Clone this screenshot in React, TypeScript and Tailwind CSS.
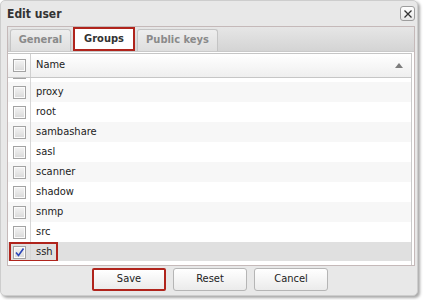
import React from "react";

const groups = ["", "proxy", "root", "sambashare", "sasl", "scanner", "shadow", "snmp", "src", "ssh"];

function Check({ checked }: { checked?: boolean }) {
  return (
    <div className="relative h-[13px] w-[13px] border border-[#a3a3a3] bg-gradient-to-b from-[#f4f4f4] to-[#d9d9d9] shadow-[inset_0_0_0_1px_#fbfbfb]">
      {checked && (
        <svg viewBox="0 0 13 13" className="absolute left-[-1px] top-[-1px] h-[13px] w-[13px]">
          <path d="M3 6.5 L5.5 9.5 L10.5 2.5" fill="none" stroke="#2a45b8" strokeWidth="1.6" />
        </svg>
      )}
    </div>
  );
}

export default function App() {
  return (
    <div className="h-[300px] w-[423px] bg-white font-['DejaVu_Sans_Condensed','DejaVu_Sans',sans-serif] text-[11px] text-[#222]">
      <div className="flex h-[296px] w-[418px] flex-col rounded-[5px] border border-[#cdcdcd] bg-[#e8e8e8] shadow-[2px_2px_3px_rgba(0,0,0,0.35)]">
        {/* title */}
        <div className="flex h-[25px] items-center justify-between pl-[6px] pr-[2px]">
          <span className="text-[12px] font-bold text-[#333]">Edit user</span>
          <button className="flex h-[15px] w-[15px] items-center justify-center rounded-[3px] border border-[#9d9d9d] bg-gradient-to-b from-white to-[#e6e6e6]">
            <svg viewBox="0 0 10 10" className="h-[10px] w-[10px]">
              <path d="M1.5 1.5 L8.5 8.5 M8.5 1.5 L1.5 8.5" stroke="#333" strokeWidth="1.3" />
            </svg>
          </button>
        </div>

        {/* tab panel */}
        <div className="ml-[6px] mr-[2px] flex h-[240px] flex-col border border-[#c5b9b9] bg-white">
          <div className="flex h-[25px] items-end gap-[2px] border-b border-[#c9c9c9] bg-gradient-to-b from-[#e6e6e6] to-[#d4d4d4] pl-[2px]">
            <div className="flex h-[22px] w-[61px] items-center justify-center rounded-t-[3px] border border-b-0 border-[#c4c4c4] bg-gradient-to-b from-[#eeeeee] to-[#dedede] font-bold text-[#8a8a8a]">
              General
            </div>
            <div className="flex h-[24px] w-[62px] items-center justify-center border-2 border-[#b0241c] bg-white font-bold text-[#333]">
              Groups
            </div>
            <div className="flex h-[22px] w-[81px] items-center justify-center rounded-t-[3px] border border-b-0 border-[#c4c4c4] bg-gradient-to-b from-[#eeeeee] to-[#dedede] font-bold text-[#8a8a8a]">
              Public keys
            </div>
          </div>

          <div className="mr-[2px] mt-[1px] flex flex-1 flex-col border-r border-[#c9c9c9]">
            {/* header */}
            <div className="flex h-[25px] items-stretch border-y border-[#c6c6c6] bg-gradient-to-b from-white to-[#efefef]">
              <div className="flex w-[23px] items-center justify-center border-r border-[#d0d0d0]">
                <Check />
              </div>
              <div className="flex flex-1 items-center justify-between pl-[5px] pr-[8px]">
                <span>Name</span>
                <svg viewBox="0 0 8 5" className="h-[5px] w-[8px]">
                  <path d="M0 5 L4 0 L8 5 Z" fill="#7d7d7d" />
                </svg>
              </div>
            </div>

            {/* rows */}
            <div className="h-[183px] overflow-hidden">
              <div className="mt-[-16px]">
                {groups.map((g, i) => {
                  const selected = g === "ssh";
                  return (
                    <div
                      key={i}
                      className={
                        "relative flex h-[20px] items-stretch " +
                        (selected ? "bg-[#e0e0e0]" : i % 2 === 1 ? "bg-[#f7f7f7]" : "bg-white")
                      }
                    >
                      <div className="flex w-[23px] items-center justify-center border-r border-[#d6d6d6]">
                        <Check checked={selected} />
                      </div>
                      <div className="flex items-center pl-[5px]">{g}</div>
                      {selected && (
                        <div className="absolute left-[1px] top-0 h-[20px] w-[49px] border-2 border-[#b0241c]" />
                      )}
                    </div>
                  );
                })}
              </div>
            </div>
          </div>
        </div>

        {/* buttons */}
        <div className="mt-[2px] flex justify-center gap-[7px] pl-[2px]">
          <button className="h-[23px] w-[74px] rounded-[2px] border-2 border-[#b0241c] bg-gradient-to-b from-white to-[#ebebeb] text-[#222]">
            Save
          </button>
          <button className="h-[23px] w-[74px] rounded-[3px] border border-[#b5b5b5] bg-gradient-to-b from-white to-[#ebebeb] text-[#222]">
            Reset
          </button>
          <button className="h-[23px] w-[74px] rounded-[3px] border border-[#b5b5b5] bg-gradient-to-b from-white to-[#ebebeb] text-[#222]">
            Cancel
          </button>
        </div>
      </div>
    </div>
  );
}
